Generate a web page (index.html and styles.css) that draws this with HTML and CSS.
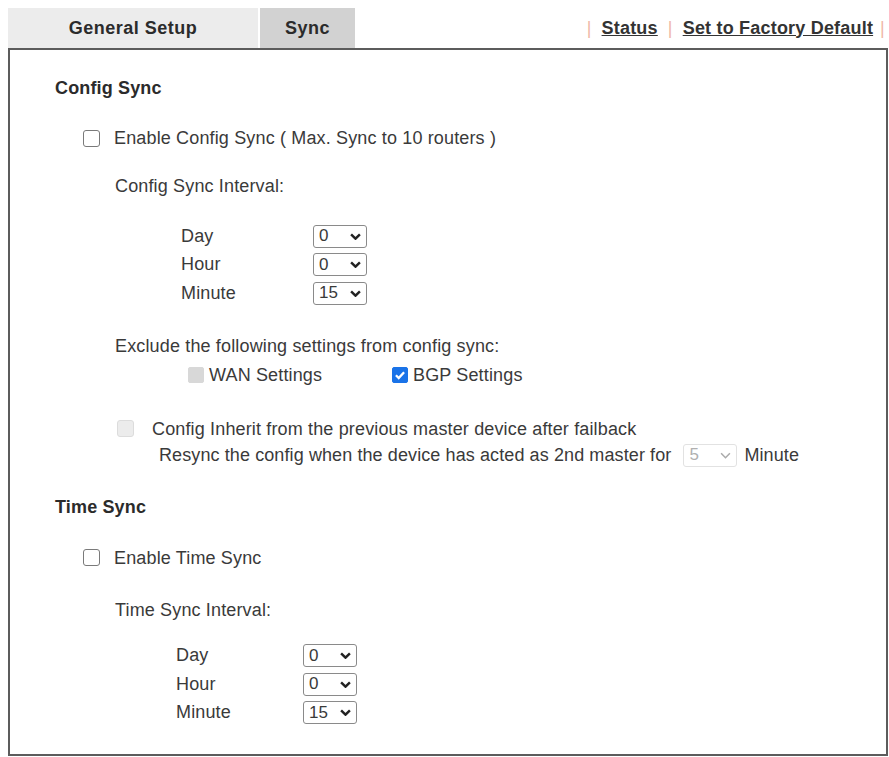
FILE: index.html
```html
<!DOCTYPE html>
<html lang="en">
<head>
    <meta charset="UTF-8">
    <title>Sync</title>
    <link rel="stylesheet" href="styles.css">
</head>
<body>
    <div class="wrap">
        <!-- tabs + links -->
        <div class="topbar">
            <div class="tab">General Setup</div>
            <div class="tab active">Sync</div>
            <div class="links">
                <span class="bar">|</span>
                <a href="#">Status</a>
                <span class="bar">|</span>
                <a href="#">Set to Factory Default</a>
                <span class="bar last">|</span>
            </div>
        </div>

        <div class="panel">
            <div class="title">Config Sync</div>

            <div class="opt row-enable">
                <span class="cb"></span>
                <span>Enable Config Sync ( Max. Sync to 10 routers )</span>
            </div>

            <div class="indent label-interval">Config Sync Interval:</div>

            <div class="grid grid-config">
                <div class="lbl">Day</div>
                <div class="sel"><span>0</span><svg viewBox="0 0 10 6"><path d="M1 1l4 4 4-4" /></svg></div>
                <div class="lbl">Hour</div>
                <div class="sel"><span>0</span><svg viewBox="0 0 10 6"><path d="M1 1l4 4 4-4" /></svg></div>
                <div class="lbl">Minute</div>
                <div class="sel"><span>15</span><svg viewBox="0 0 10 6"><path d="M1 1l4 4 4-4" /></svg></div>
            </div>

            <div class="indent label-exclude">Exclude the following settings from config sync:</div>
            <div class="excl">
                <div class="excl-item wan">
                    <span class="cb small checked-off"></span>
                    <span>WAN Settings</span>
                </div>
                <div class="excl-item">
                    <span class="cb small checked">
                        <svg viewBox="0 0 12 12"><path d="M2.5 6.2l2.4 2.4 4.6-5" /></svg>
                    </span>
                    <span>BGP Settings</span>
                </div>
            </div>

            <div class="inherit">
                <span class="cb disabled"></span>
                <span>Config Inherit from the previous master device after failback</span>
            </div>
            <div class="resync">
                <span>Resync the config when the device has acted as 2nd master for</span>
                <div class="sel sel-off"><span>5</span><svg viewBox="0 0 10 6"><path d="M1 1l4 4 4-4" /></svg></div>
                <span>Minute</span>
            </div>

            <div class="title title-time">Time Sync</div>

            <div class="opt row-enable-time">
                <span class="cb"></span>
                <span>Enable Time Sync</span>
            </div>

            <div class="indent label-interval-time">Time Sync Interval:</div>

            <div class="grid grid-time">
                <div class="lbl">Day</div>
                <div class="sel"><span>0</span><svg viewBox="0 0 10 6"><path d="M1 1l4 4 4-4" /></svg></div>
                <div class="lbl">Hour</div>
                <div class="sel"><span>0</span><svg viewBox="0 0 10 6"><path d="M1 1l4 4 4-4" /></svg></div>
                <div class="lbl">Minute</div>
                <div class="sel"><span>15</span><svg viewBox="0 0 10 6"><path d="M1 1l4 4 4-4" /></svg></div>
            </div>
        </div>
    </div>
</body>
</html>
```

FILE: styles.css
```css
body
{
    margin: 0;
    padding: 0;
    font-family: "Liberation Sans", Arial, sans-serif;
    font-size: 18px;
    letter-spacing: 0.15px;
    color: #3a3a3a;
    background: #fff;
}

.wrap
{
    margin-left: 8px;
    width: 880px;
    padding-top: 8px;
}

/* tabs row */
.topbar
{
    display: flex;
    align-items: stretch;
    height: 40px;
}

.tab
{
    width: 250px;
    background-color: #ececec;
    font-weight: bold;
    letter-spacing: 0.5px;
    display: flex;
    align-items: center;
    justify-content: center;
    color: #2b2b2b;
}

.tab.active
{
    width: 95px;
    margin-left: 2px;
    background-color: #d2d2d2;
}

.links
{
    margin-left: auto;
    display: flex;
    align-items: center;
    gap: 10px;
    padding-right: 3px;
    font-weight: bold;
    letter-spacing: 0.2px;
}

.links a
{
    color: #333;
    text-decoration: underline;
}

.links .bar
{
    color: #f0b8a8;
    font-weight: normal;
}

.links .bar.last
{
    margin-left: -3px;
}

/* main box */
.panel
{
    border: 2px solid #5c5c5c;
    height: 708px;
    box-sizing: border-box;
    padding: 28px 0 0 45px;
}

.title
{
    font-weight: bold;
    line-height: 20px;
    color: #2b2b2b;
}

.opt
{
    display: flex;
    align-items: center;
    gap: 14px;
    margin-left: 28px;
    line-height: 20px;
}

.cb
{
    width: 15px;
    height: 15px;
    border: 1.5px solid #7a7a7a;
    border-radius: 3px;
    background: #fff;
    display: inline-block;
    flex-shrink: 0;
}

.cb.small
{
    width: 14px;
    height: 14px;
    border-radius: 2px;
}

.cb.checked-off
{
    background: #d8d8d8;
    border-color: #d8d8d8;
}

.cb.checked
{
    background: #1a73e8;
    border-color: #1a73e8;
    display: flex;
}

.cb.checked svg
{
    width: 14px;
    height: 14px;
    fill: none;
    stroke: #fff;
    stroke-width: 2;
}

.cb.disabled
{
    background: #ececec;
    border-color: #dcdcdc;
}

.row-enable { margin-top: 30px; }

.indent
{
    margin-left: 60px;
    line-height: 20px;
}

.label-interval { margin-top: 28px; }

.grid
{
    display: grid;
    grid-template-columns: 132px 54px;
    grid-auto-rows: 28.5px;
    align-items: center;
}

.grid-config
{
    margin: 26px 0 0 126px;
}

.grid-time
{
    margin: 22px 0 0 121px;
    grid-template-columns: 127px 54px;
}

.sel
{
    width: 54px;
    height: 23px;
    box-sizing: border-box;
    border: 1.5px solid #8a8a8a;
    border-radius: 3px;
    display: flex;
    align-items: center;
    justify-content: space-between;
    padding: 0 5px 0 5px;
    background: #fff;
    font-size: 17px;
    letter-spacing: 0;
}

.sel svg
{
    width: 11px;
    height: 7px;
    fill: none;
    stroke: #222;
    stroke-width: 2.2;
}

.sel-off
{
    border-color: #e2e2e2;
    color: #b0b0b0;
    margin: 0 7px 0 12px;
}

.sel-off svg
{
    stroke: #aaa;
    stroke-width: 1.4;
}

.label-exclude { margin-top: 28px; }

.excl
{
    display: flex;
    margin: 9px 0 0 133px;
    line-height: 20px;
}

.excl-item
{
    display: flex;
    align-items: center;
    gap: 5px;
}

.excl-item.wan
{
    width: 204px;
}

.inherit
{
    display: flex;
    align-items: center;
    gap: 18px;
    margin: 34px 0 0 62px;
    line-height: 20px;
}

.resync
{
    display: flex;
    align-items: center;
    margin: 5px 0 0 104px;
    letter-spacing: 0.1px;
    line-height: 22px;
}

.title-time { margin-top: 30px; }

.row-enable-time { margin-top: 31px; }

.label-interval-time { margin-top: 32px; }
```
